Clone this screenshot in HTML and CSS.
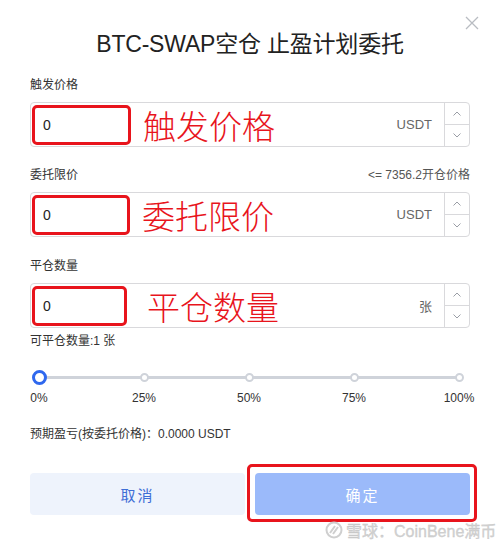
FILE: index.html
```html
<!DOCTYPE html>
<html lang="zh">
<head>
<meta charset="utf-8">
<link rel="stylesheet" href="styles.css">
</head>
<body>
<div class="dialog">
  <div class="close">
    <svg width="14" height="14" viewBox="0 0 14 14"><path d="M1 1L13 13M13 1L1 13" stroke="#b9bcc2" stroke-width="1.3" fill="none"/></svg>
  </div>
  <h1 class="title">BTC-SWAP空仓 止盈计划委托</h1>

  <div class="field f1">
    <div class="label-row"><span class="label">触发价格</span></div>
    <div class="input">
      <div class="value mark w99">0</div>
      <div class="note">触发价格</div>
      <div class="unit">USDT</div>
      <div class="stepper"><span class="up"><svg width="8" height="5" viewBox="0 0 8 5"><path d="M0.5 4.5L4 1L7.5 4.5" stroke="#9a9ea6" fill="none"/></svg></span><span class="down"><svg width="8" height="5" viewBox="0 0 8 5"><path d="M0.5 0.5L4 4L7.5 0.5" stroke="#9a9ea6" fill="none"/></svg></span></div>
    </div>
  </div>

  <div class="field f2">
    <div class="label-row"><span class="label">委托限价</span><span class="hint">&lt;= 7356.2开仓价格</span></div>
    <div class="input">
      <div class="value mark w98">0</div>
      <div class="note">委托限价</div>
      <div class="unit">USDT</div>
      <div class="stepper"><span class="up"><svg width="8" height="5" viewBox="0 0 8 5"><path d="M0.5 4.5L4 1L7.5 4.5" stroke="#9a9ea6" fill="none"/></svg></span><span class="down"><svg width="8" height="5" viewBox="0 0 8 5"><path d="M0.5 0.5L4 4L7.5 0.5" stroke="#9a9ea6" fill="none"/></svg></span></div>
    </div>
  </div>

  <div class="field f3">
    <div class="label-row"><span class="label">平仓数量</span></div>
    <div class="input">
      <div class="value mark w95">0</div>
      <div class="note n3">平仓数量</div>
      <div class="unit">张</div>
      <div class="stepper"><span class="up"><svg width="8" height="5" viewBox="0 0 8 5"><path d="M0.5 4.5L4 1L7.5 4.5" stroke="#9a9ea6" fill="none"/></svg></span><span class="down"><svg width="8" height="5" viewBox="0 0 8 5"><path d="M0.5 0.5L4 4L7.5 0.5" stroke="#9a9ea6" fill="none"/></svg></span></div>
    </div>
    <div class="avail">可平仓数量:1 张</div>
  </div>

  <div class="slider">
    <div class="track">
      <span class="dot" style="left:25%"></span>
      <span class="dot" style="left:50%"></span>
      <span class="dot" style="left:75%"></span>
      <span class="dot" style="left:100%"></span>
      <span class="handle" style="left:0%"></span>
    </div>
    <div class="marks">
      <span style="left:0%">0%</span>
      <span style="left:25%">25%</span>
      <span style="left:50%">50%</span>
      <span style="left:75%">75%</span>
      <span style="left:100%">100%</span>
    </div>
  </div>

  <div class="pnl">预期盈亏(按委托价格)：0.0000 USDT</div>

  <div class="buttons">
    <button class="btn cancel">取消</button>
    <div class="confirm-wrap"><button class="btn confirm">确定</button></div>
  </div>

  <div class="watermark">
    <svg width="18" height="18" viewBox="0 0 18 18"><circle cx="9" cy="9" r="7.5" fill="none" stroke="#cfcfcf" stroke-width="2"/><path d="M5 12L10 5M8 13L13 6" stroke="#cfcfcf" stroke-width="2" fill="none"/></svg>
    <span>雪球：CoinBene满币</span>
  </div>
</div>
</body>
</html>
```
FILE: styles.css
```css
* { box-sizing: border-box; }
html, body { margin: 0; padding: 0; background: #fff; }
body {
  width: 500px;
  height: 544px;
  overflow: hidden;
  font-family: "Liberation Sans", "Noto Sans CJK SC", sans-serif;
  color: #333;
}
.dialog {
  position: relative;
  width: 500px;
  height: 544px;
  padding: 0 30px;
}
.close {
  position: absolute;
  top: 16px;
  left: 465px;
  width: 14px;
  height: 14px;
  line-height: 0;
}
.title {
  margin: 0;
  padding-top: 28px;
  height: 60px;
  line-height: 32px;
  font-size: 23px;
  font-weight: normal;
  text-align: center;
  color: #222;
  letter-spacing: -0.2px;
}
.field { display: flex; flex-direction: column; }
.f1 { margin-top: 17px; }
.f2 { margin-top: 20px; }
.f3 { margin-top: 21px; }
.label-row {
  display: flex;
  justify-content: space-between;
  align-items: center;
  height: 16px;
  font-size: 12px;
  line-height: 16px;
  margin-bottom: 9px;
}
.label { color: #333; }
.hint { color: #555; font-size: 12px; }
.input {
  display: flex;
  align-items: center;
  height: 45px;
  border: 1px solid #d9d9dc;
  border-radius: 4px;
  background: #fff;
}
.value {
  height: 40px;
  margin: 0 0 0 1px;
  padding-left: 8px;
  display: flex;
  align-items: center;
  font-size: 14px;
  color: #222;
}
.mark {
  border: 3px solid #e8141c;
  border-radius: 5px;
}
.w99 { width: 99px; }
.w98 { width: 98px; }
.w95 { width: 95px; }
.note {
  margin-left: 12px;
  font-family: "Noto Sans CJK SC", sans-serif;
  font-weight: 300;
  font-size: 33px;
  line-height: 40px;
  color: #e8141c;
  flex: 1;
}
.n3 { margin-left: 20px; }
.unit {
  font-size: 13px;
  color: #666;
  padding-right: 12px;
}
.stepper {
  align-self: stretch;
  width: 25px;
  border-left: 1px solid #d9d9dc;
  display: flex;
  flex-direction: column;
}
.stepper span {
  flex: 1;
  display: flex;
  align-items: center;
  justify-content: center;
}
.stepper .up { border-bottom: 1px solid #d9d9dc; }
.avail {
  margin-top: 5px;
  font-size: 12px;
  line-height: 16px;
  color: #333;
}
.slider {
  padding: 0 11px 0 9px;
  margin-top: 27px;
}
.track {
  position: relative;
  height: 3px;
  background: #cfd3da;
  border-radius: 2px;
}
.dot {
  position: absolute;
  top: 50%;
  width: 9px;
  height: 9px;
  margin: -4.5px 0 0 -4.5px;
  border-radius: 50%;
  background: #fff;
  border: 2px solid #cfd3da;
}
.handle {
  position: absolute;
  top: 50%;
  width: 15px;
  height: 15px;
  margin: -7.5px 0 0 -7.5px;
  border-radius: 50%;
  background: #fff;
  border: 3px solid #2f68ee;
}
.marks {
  position: relative;
  height: 20px;
  margin-top: 11px;
  font-size: 12px;
  line-height: 16px;
  color: #333;
}
.marks span {
  position: absolute;
  top: 0;
  transform: translateX(-50%);
}
.pnl {
  margin-top: 16px;
  font-size: 12px;
  line-height: 16px;
  color: #333;
}
.buttons {
  margin-top: 31px;
  display: flex;
  gap: 10px;
  height: 42px;
}
.btn {
  border: 0;
  border-radius: 4px;
  font-family: "Noto Sans CJK SC", sans-serif;
  font-size: 15px;
  letter-spacing: 2px;
  height: 42px;
  cursor: pointer;
}
.cancel {
  width: 215px;
  background: #eef3fc;
  color: #3e6ed6;
}
.confirm-wrap {
  position: relative;
  width: 215px;
}
.confirm-wrap::before {
  content: "";
  position: absolute;
  left: -8px;
  top: -9px;
  right: -7px;
  bottom: -7px;
  border: 3px solid #e8141c;
  border-radius: 5px;
}
.confirm {
  width: 215px;
  background: #9bbafa;
  color: #fff;
  position: relative;
}
.watermark {
  position: absolute;
  left: 325px;
  top: 518px;
  display: flex;
  align-items: center;
  gap: 3px;
  font-family: "Liberation Sans", "Noto Sans CJK SC", sans-serif;
  font-size: 16px;
  color: #d2d2d2;
  -webkit-text-stroke: 0.3px #c4c4c4;
  text-shadow: 0 0 2px #fff;
}
```
